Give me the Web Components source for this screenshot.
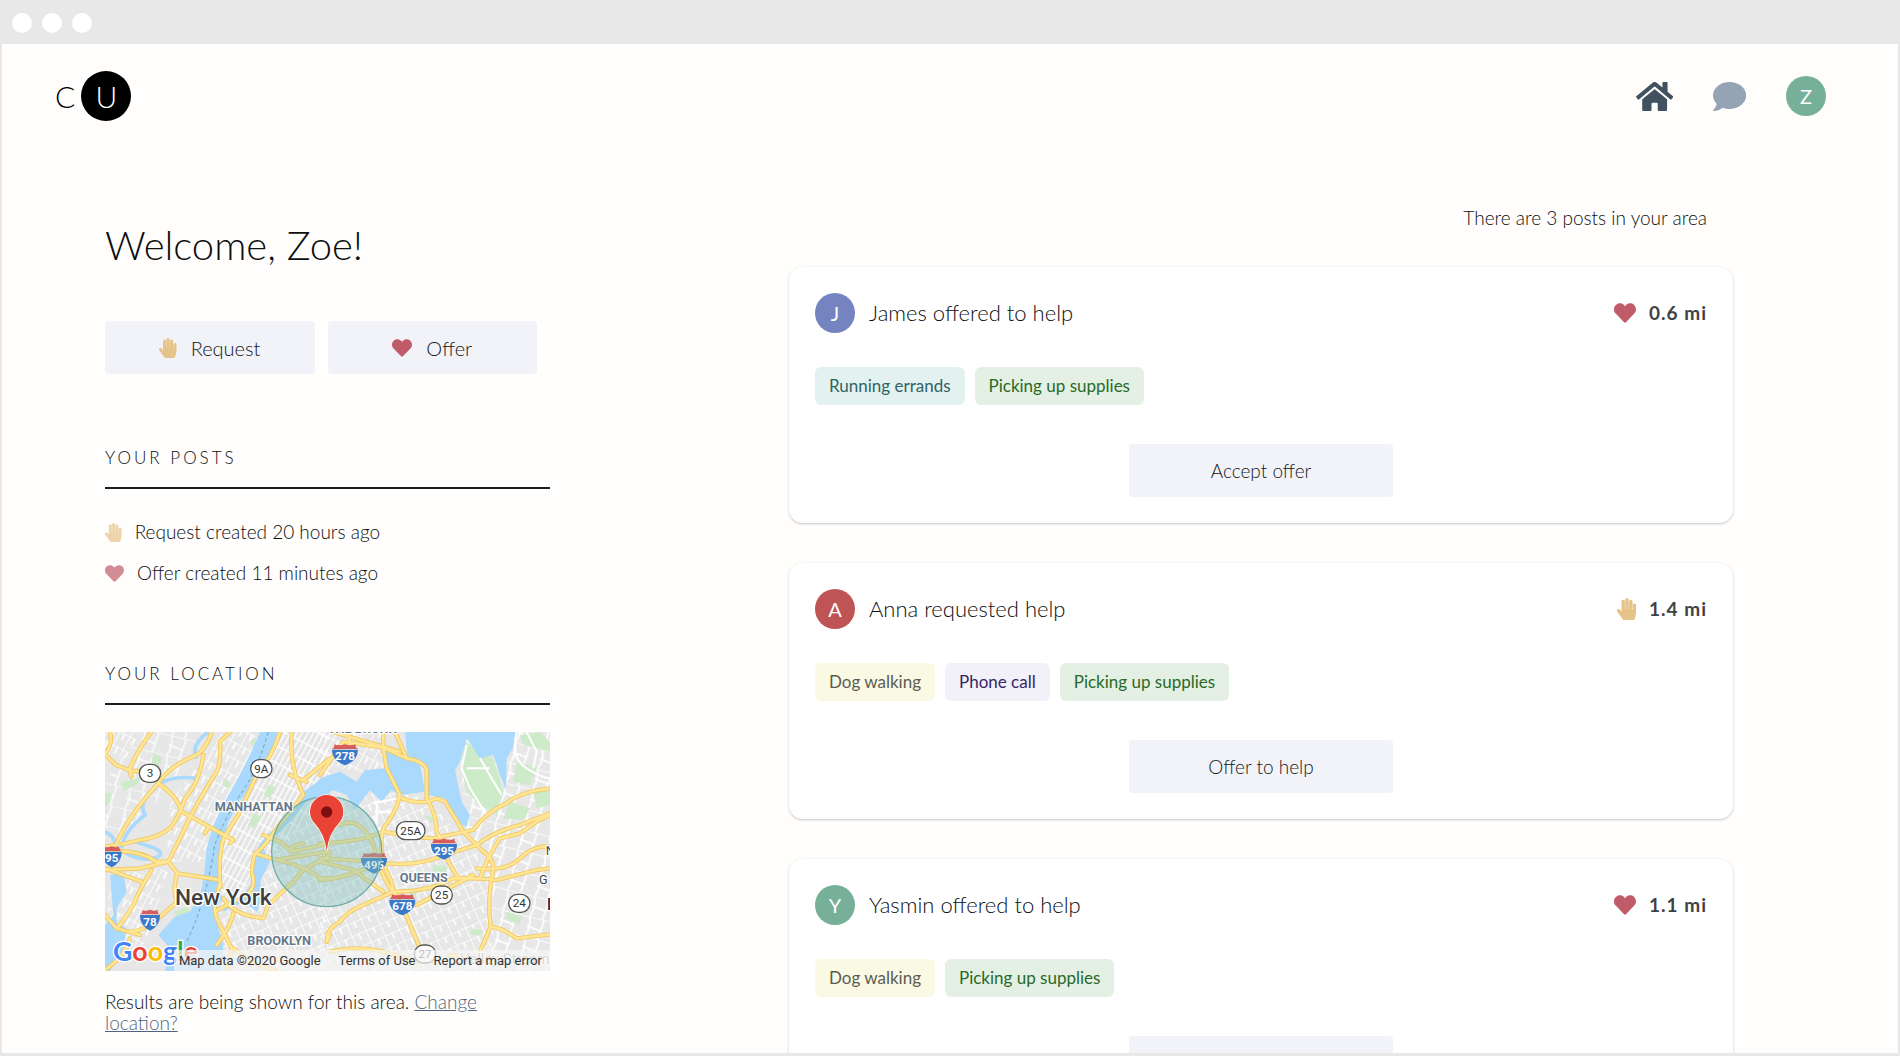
<!DOCTYPE html>
<html lang="en">
<head>
<meta charset="utf-8">
<meta name="viewport" content="width=device-width, initial-scale=1">
<title>CU</title>
<style>
  html, body { margin: 0; height: 100%; }
  body {
    font-family: Lato, "Open Sans", sans-serif;
    font-weight: 300;
    font-size: 19px;
    line-height: 24px;
    color: #0c0e10;
    background: #e8e8e8;
  }
</style>
</head>
<body>
<cu-window>
  <cu-header slot="header"></cu-header>
  <cu-dashboard>
    <cu-sidebar slot="side"></cu-sidebar>
    <cu-feed slot="feed">
      <cu-post initial="J" color="#7583c0" kind="offer" distance="0.6 mi" action="Accept offer">
        James offered to help
        <cu-tag slot="tags" tone="teal">Running errands</cu-tag>
        <cu-tag slot="tags" tone="green">Picking up supplies</cu-tag>
      </cu-post>
      <cu-post initial="A" color="#be5454" kind="request" distance="1.4 mi" action="Offer to help">
        Anna requested help
        <cu-tag slot="tags" tone="yellow">Dog walking</cu-tag>
        <cu-tag slot="tags" tone="purple">Phone call</cu-tag>
        <cu-tag slot="tags" tone="green">Picking up supplies</cu-tag>
      </cu-post>
      <cu-post initial="Y" color="#77b098" kind="offer" distance="1.1 mi" action="Accept offer">
        Yasmin offered to help
        <cu-tag slot="tags" tone="yellow">Dog walking</cu-tag>
        <cu-tag slot="tags" tone="green">Picking up supplies</cu-tag>
      </cu-post>
    </cu-feed>
  </cu-dashboard>
</cu-window>

<script>
const define = (name, render) => customElements.define(name, class extends HTMLElement {
  connectedCallback() {
    if (this.shadowRoot) return;
    this.attachShadow({ mode: "open" }).innerHTML = render(this);
  }
});

const ICONS = {
  home: ["0 32 576 448", "M280.37 148.26L96 300.11V464a16 16 0 0 0 16 16l112.06-.29a16 16 0 0 0 15.92-16V368a16 16 0 0 1 16-16h64a16 16 0 0 1 16 16v95.64a16 16 0 0 0 16 16.05L464 480a16 16 0 0 0 16-16V300L295.67 148.26a12.19 12.19 0 0 0-15.3 0zM571.6 251.47L488 182.56V44.05a12 12 0 0 0-12-12h-56a12 12 0 0 0-12 12v72.61L318.47 43a48 48 0 0 0-61 0L4.34 251.47a12 12 0 0 0-1.6 16.9l25.5 31A12 12 0 0 0 45.15 301l235.22-193.74a12.19 12.19 0 0 1 15.3 0L530.9 301a12 12 0 0 0 16.9-1.6l25.5-31a12 12 0 0 0-1.7-16.93z"],
  comment: ["0 32 512 448", "M256 32C114.6 32 0 125.1 0 240c0 49.6 21.4 95 57 130.7C44.5 421.1 2.7 466 2.2 466.5c-2.2 2.3-2.8 5.7-1.5 8.7S4.8 480 8 480c66.3 0 116-31.8 140.6-51.4 32.7 12.3 69 19.4 107.4 19.4 141.4 0 256-93.1 256-208S397.4 32 256 32z"],
  request: ["0 0 448 512", "M408.781 128.007C386.356 127.578 368 146.36 368 168.79V256h-8V79.79c0-22.43-18.356-41.212-40.781-40.783C297.488 39.423 280 57.169 280 79v177h-8V40.79C272 18.36 253.644-.422 231.219.007 209.488.423 192 18.169 192 40v216h-8V80.79c0-22.43-18.356-41.212-40.781-40.783C121.488 40.423 104 58.169 104 80v235.992l-31.648-43.519c-12.993-17.866-38.009-21.817-55.877-8.823-17.865 12.994-21.815 38.01-8.822 55.877l125.601 172.705A48 48 0 0 0 172.073 512h197.59c22.274 0 41.622-15.324 46.724-37.006l26.508-112.66a192.011 192.011 0 0 0 5.104-43.975V168c.001-21.831-17.487-39.577-39.218-39.993z"],
  offer: ["0 0 512 512", "M462.3 62.6C407.5 15.9 326 24.3 275.7 76.2L256 96.5l-19.7-20.3C186.1 24.3 104.5 15.9 49.7 62.6c-62.8 53.6-66.1 149.8-9.9 207.9l193.5 199.8c12.5 12.9 32.8 12.9 45.3 0l193.5-199.8c56.3-58.1 53-154.3-9.8-207.9z"]
};

/* Icon drawn as high as --size, in its own colour. */
define("cu-icon", el => {
  const [box, d] = ICONS[el.getAttribute("name")];
  return `
  <style>
    :host { display: block; flex: none; height: var(--size, 20px); color: inherit; }
    :host([name="request"]) { color: #e6c388; }
    :host([name="offer"]) { color: #c05c69; }
    svg { display: block; height: 100%; fill: currentColor; }
  </style>
  <svg viewBox="${box}" aria-hidden="true"><path d="${d}"/></svg>`;
});

define("cu-avatar", el => `
  <style>
    :host {
      display: flex; align-items: center; justify-content: center; flex: none;
      width: 40px; height: 40px; border-radius: 50%;
      background: ${el.getAttribute("color")}; color: #fff;
      font-size: 20px; font-weight: 400;
    }
  </style>
  <slot></slot>`);

define("cu-tag", () => `
  <style>
    :host { display: block; padding: 7px 14px; border-radius: 6px; font-size: 17px; font-weight: 400; }
    :host([tone="teal"]) { background: #e4f1f1; color: #2f6464; }
    :host([tone="green"]) { background: #e5f0e4; color: #286a28; }
    :host([tone="yellow"]) { background: #f9f9e4; color: #5c5c55; }
    :host([tone="purple"]) { background: #f2f0f9; color: #352667; }
  </style>
  <slot></slot>`);

define("cu-button", () => `
  <style>
    :host { display: block; }
    button {
      display: flex; align-items: center; justify-content: center; gap: 14px;
      width: 100%; height: 53px; border: 0; border-radius: 4px; padding: 0 16px;
      background: #f2f3f8; color: #14171a; font: inherit; cursor: pointer;
    }
  </style>
  <button type="button"><slot></slot></button>`);

define("cu-window", () => `
  <style>
    :host { display: flex; flex-direction: column; height: 100vh; box-sizing: border-box; padding: 0 2px 3px; background: #e8e8e8; }
    .bar { flex: none; display: flex; align-items: center; gap: 10px; height: 44px; padding: 2px 10px 0; box-sizing: border-box; }
    .bar i { width: 20px; height: 20px; border-radius: 50%; background: #fff; }
    .view { flex: 1; min-height: 0; overflow: hidden; background: #fffefc; }
  </style>
  <div class="bar"><i></i><i></i><i></i></div>
  <div class="view"><slot name="header"></slot><slot></slot></div>`);

define("cu-header", () => `
  <style>
    :host { display: block; }
    header { display: flex; align-items: center; justify-content: space-between; padding: 27px 72px 25px 53px; }
    .logo { display: flex; align-items: center; gap: 6px; color: #000; text-decoration: none; font-size: 30px; line-height: 50px; }
    .logo b { width: 50px; height: 50px; border-radius: 50%; background: #000; color: #fff; font-weight: inherit; text-align: center; }
    nav { display: flex; align-items: center; gap: 40px; --size: 29px; }
    nav a { display: block; color: #95a4b4; text-decoration: none; }
    nav a.on { color: #42515f; }
  </style>
  <header>
    <a class="logo" href="#home"><span>C</span><b>U</b></a>
    <nav>
      <a class="on" href="#home" aria-label="Home"><cu-icon name="home"></cu-icon></a>
      <a href="#messages" aria-label="Messages"><cu-icon name="comment"></cu-icon></a>
      <a href="#profile"><cu-avatar color="#77b098">Z</cu-avatar></a>
    </nav>
  </header>`);

define("cu-dashboard", () => `
  <style>
    :host { display: grid; grid-template-columns: minmax(0, 445fr) minmax(0, 944fr); gap: 239px; padding: 0 165px 0 103px; }
  </style>
  <slot name="side"></slot><slot name="feed"></slot>`);

define("cu-section", () => `
  <style>
    :host { display: block; }
    h2 { margin: 0; padding-bottom: 17px; border-bottom: 2px solid #1c1f21; font: inherit; font-size: 17px; line-height: 24px; letter-spacing: 3px; text-transform: uppercase; }
  </style>
  <h2><slot name="title"></slot></h2>
  <slot></slot>`);

define("cu-sidebar", () => `
  <style>
    :host { display: block; padding-top: 75px; }
    h1 { margin: 0 0 52px; font-size: 40px; line-height: 48px; font-weight: 300; }
    .actions { display: grid; grid-template-columns: 1fr 1fr; gap: 13px; margin: 0 13px 72px 0; font-size: 20px; }
    ul { list-style: none; margin: 31px 0 77px; padding: 0; display: grid; gap: 17px; --size: 19px; }
    li { display: flex; align-items: center; gap: 13px; }
    li cu-icon { opacity: .7; }
    cu-map { margin-top: 27px; }
    p { margin: 20px 0 0; line-height: 21px; padding-right: 40px; }
    a { color: #4f6380; }
  </style>
  <h1>Welcome, Zoe!</h1>
  <div class="actions">
    <cu-button><cu-icon name="request"></cu-icon>Request</cu-button>
    <cu-button><cu-icon name="offer"></cu-icon>Offer</cu-button>
  </div>
  <cu-section>
    <span slot="title">Your posts</span>
    <ul>
      <li><cu-icon name="request"></cu-icon>Request created 20 hours ago</li>
      <li><cu-icon name="offer"></cu-icon>Offer created 11 minutes ago</li>
    </ul>
  </cu-section>
  <cu-section>
    <span slot="title">Your location</span>
    <cu-map></cu-map>
    <p>Results are being shown for this area. <a href="#location">Change location?</a></p>
  </cu-section>`);

define("cu-feed", () => `
  <style>
    :host { display: flex; flex-direction: column; gap: 40px; padding-top: 60px; }
    p { margin: 0 26px -3px; text-align: right; }
  </style>
  <p>There are 3 posts in your area</p>
  <slot></slot>`);

define("cu-post", el => `
  <style>
    :host { display: block; }
    article { padding: 26px; border-radius: 14px; background: #fff; box-shadow: 0 1px 3px rgba(0,0,0,.18), 0 1px 2px rgba(0,0,0,.06); }
    .top { display: flex; align-items: center; gap: 14px; }
    h3 { flex: 1; margin: 0; font: inherit; font-size: 22px; }
    .far { display: flex; align-items: center; gap: 13px; font-size: 19px; font-weight: 700; letter-spacing: 1px; color: #3f4244; --size: 22px; }
    .tags { display: flex; gap: 10px; margin: 34px 0 39px; }
    cu-button { width: 264px; margin: 0 auto; }
  </style>
  <article>
    <div class="top">
      <cu-avatar color="${el.getAttribute("color")}">${el.getAttribute("initial")}</cu-avatar>
      <h3><slot></slot></h3>
      <span class="far"><cu-icon name="${el.getAttribute("kind")}"></cu-icon>${el.getAttribute("distance")}</span>
    </div>
    <div class="tags"><slot name="tags"></slot></div>
    <cu-button>${el.getAttribute("action")}</cu-button>
  </article>`);

/* Interstate shield centred on x, with its top at y. */
const shield = (x, y, n) => {
  const w = n.length > 2 ? 39 : 30;
  return `<g transform="translate(${x} ${y})">
    <path d="M${-w} 14Q${-w + 9} 10 ${-w + 7} 0Q${-w / 2} 6 0 0Q${w / 2} 6 ${w - 7} 0Q${w - 9} 10 ${w} 14z" fill="#d85c5c"/>
    <path d="M${-w} 16H${w}Q${w + 1} 48 0 63Q${-w - 1} 48 ${-w} 16z" fill="#3a78c9"/>
    <text y="48" font-size="35" font-weight="700" fill="#fff" text-anchor="middle">${n}</text></g>`;
};
/* State-route oval centred on x, y. */
const route = (x, y, n) => {
  const w = n.length > 2 ? 43 : 32;
  return `<g transform="translate(${x} ${y})"><rect x="${-w}" y="-27" width="${w * 2}" height="54" rx="27" fill="#fff" stroke="#555" stroke-width="4"/>
    <text y="12" font-size="35" fill="#333" text-anchor="middle">${n}</text></g>`;
};

define("cu-map", () => `
  <style>
    :host { display: block; position: relative; overflow: hidden; font-family: Roboto, sans-serif; font-weight: 400; }
    svg { display: block; width: 100%; }
    .legal {
      position: absolute; right: 0; bottom: 0; display: flex; gap: 18px; padding: 0 8px 0 5px;
      font-size: 13px; line-height: 21px; white-space: nowrap; background: rgba(245,245,245,.7); color: #333;
    }
    .legal a { color: inherit; text-decoration: none; }
  </style>
  <svg viewBox="0 0 1335 717" role="img" aria-label="Map of New York">
    <defs>
      <pattern id="fine" width="34" height="44" patternUnits="userSpaceOnUse" patternTransform="rotate(28)"><path d="M0 0V44M0 0H34M17 0V22" stroke="#fff" stroke-width="5" fill="none"/></pattern>
      <pattern id="island" width="15" height="46" patternUnits="userSpaceOnUse" patternTransform="rotate(28)"><path d="M0 0V46M0 0H15" stroke="#fff" stroke-width="8" fill="none"/></pattern>
      <pattern id="mid" width="46" height="38" patternUnits="userSpaceOnUse" patternTransform="rotate(-24)"><path d="M0 0V38M0 0H46M24 0V20" stroke="#fff" stroke-width="5" fill="none"/></pattern>
      <pattern id="wide" width="84" height="62" patternUnits="userSpaceOnUse" patternTransform="rotate(14)"><path d="M0 0Q14 30 0 62M0 0H84M46 0L40 62M0 30L46 36" stroke="#fff" stroke-width="5" fill="none"/></pattern>
      <g id="roads" fill="none" stroke-linecap="round" stroke-linejoin="round">
        <g transform="translate(-45 -51)">
          <path d="M45 118L78 150L125 168H150M125 185L118 165Q135 120 183 51M60 51Q70 85 45 118"/>
          <path d="M365 51Q350 100 320 120Q240 150 200 210Q110 310 78 390L45 395"/>
          <path d="M340 120Q330 200 285 250Q270 300 240 340Q200 370 150 375L95 388"/>
          <path d="M205 205Q260 240 275 290L430 375L420 385M355 338L345 355"/>
          <path d="M420 51L390 80Q395 160 370 185Q300 300 275 360L235 440"/>
          <path d="M45 410Q140 400 200 440L235 440L262 475L390 495L392 515"/>
          <path d="M45 465L150 460L235 440M185 465Q150 520 130 570Q100 620 80 640L45 600M45 460L155 500"/>
          <path d="M262 475Q245 530 262 560L205 610Q160 650 120 650M80 640L150 660M120 670Q110 720 45 765"/>
          <path d="M570 51Q550 120 500 180L445 300L400 370Q385 430 390 500L375 570Q370 600 400 650L425 700L410 768"/>
          <path d="M605 51Q600 130 620 190L640 240L560 340Q520 400 495 415Q480 470 490 490Q495 540 430 560L375 590M400 550Q430 600 520 610L535 570L610 500L640 465"/>
          <path d="M640 195L720 130M600 180L650 200M520 360L570 380L605 410L720 385M495 415L560 435Q640 420 720 410M560 435Q650 455 690 490H720M605 410Q600 390 640 385M640 465L720 420"/>
          <path d="M430 595Q420 640 380 690M710 680L720 660M430 700L480 740L560 768"/>
        </g>
        <g transform="translate(645 -51)">
          <path d="M0 180L70 80L190 98L260 130Q320 140 320 170V250M190 51V98M40 51L240 110M225 51L260 130M85 51L90 90"/>
          <path d="M190 98L200 160L240 240Q230 290 190 340Q170 420 215 500L220 530"/>
          <path d="M235 245Q300 275 350 250L375 260L430 350L490 410Q520 430 520 460Q500 560 512 635L480 710"/>
          <path d="M320 250Q350 300 350 350Q380 400 385 440L415 490"/>
          <path d="M0 385Q130 380 190 350L270 365L340 370L460 345Q500 290 560 265Q600 230 690 220"/>
          <path d="M0 430L160 440Q270 460 360 425L470 390Q520 350 600 330L690 295"/>
          <path d="M0 495Q80 490 160 450M60 330Q120 300 160 390Q190 510 230 540M0 440L100 465L190 530"/>
          <path d="M20 680Q20 640 60 620Q80 590 130 570L220 530Q330 530 400 490H480Q500 430 540 370L600 355L650 320L690 300"/>
          <path d="M470 460Q560 470 600 430T690 395M470 490L530 495L650 465L690 460M220 530L250 580L300 700M290 570L460 480"/>
          <path d="M512 635Q550 640 590 670L690 658M30 710Q110 690 190 710L290 740M390 720L500 735"/>
        </g>
      </g>
    </defs>
    <rect width="1335" height="717" fill="#e7e7e7"/>
    <g transform="translate(-45 -51)">
      <path d="M45 51H150L110 130L45 120zM240 260L400 51H510L340 440L230 440zM60 480L240 460L160 700L45 740z" fill="url(#fine)"/>
      <path d="M150 51H340L250 200L80 400L45 330V200z" fill="url(#wide)" opacity=".8"/>
      <path d="M560 51H720V230L500 480L400 590L380 520L400 380L500 180z" fill="#e4e4e4"/>
      <path d="M560 51H720V230L500 480L400 590L380 520L400 380L500 180z" fill="url(#island)"/>
      <path d="M500 480L560 380L720 260V768H400L390 590z" fill="url(#mid)"/>
      <g fill="#cdeac9"><path d="M188 112L218 130L200 165L185 160zM45 235h22l-10 30-12 15zM95 205l60-20-10 22-45 20zM535 210l22 8-18 32-18-12zM490 295l25 10-22 35-20-8zM400 190l22 15-8 15-15-8zM250 590l40-15 15 20-40 15zM350 620l35 20 15 50-25-15zM480 80l20-15-5 40z"/></g>
      <g fill="#a9d9fd"><path d="M510 51H562Q545 120 510 165L450 260L415 320L402 370Q385 430 385 490L398 550L372 590L385 640L400 690L392 768H225L240 700L205 660L255 605L300 590L330 540Q345 480 350 400Q370 320 410 250Q470 150 510 51z"/>
        <path d="M60 480L100 475L110 530L80 580V625L110 640L100 700L60 768H45V630L70 600z"/>
        <path d="M720 190V240L650 260L600 320Q540 380 520 400L540 440L510 500L520 540L500 590L460 560L400 590V575L460 545L485 500Q480 440 510 385Q560 330 605 290L640 230L690 195z"/></g>
      <path d="M355 51Q300 90 320 130M205 210Q240 180 320 190M200 215Q140 260 165 300Q100 350 95 400M100 410Q150 440 190 430T195 400L135 380M45 350Q90 370 80 440" fill="none" stroke="#a9d9fd" stroke-width="11"/>
      <path d="M535 51Q500 170 450 240Q370 370 370 420Q340 580 290 680" fill="none" stroke="#7e98ad" stroke-width="3" stroke-dasharray="11 8"/>
    </g>
    <g transform="translate(645 -51)">
      <path d="M0 51H190V180L0 150z" fill="url(#fine)"/>
      <path d="M0 260L240 220L330 260L430 370L520 460V768H0z" fill="url(#mid)"/>
      <path d="M420 51H690V768H500V460L430 340z" fill="url(#wide)"/>
      <g fill="#cdeac9"><path d="M430 75L480 110L520 130L550 230L530 300L480 270L440 230L425 160zM600 60L660 51L690 80V110L610 90zM590 140l60 20-20 50-50-10zM570 260l60 20-20 35-60-5zM640 230l50-10v50l-40 10zM200 120l40 10-20 40zM340 450l45 5-20 40-30-10zM250 520l45 5-10 25zM455 640l35 8-6 14-35-5zM560 590l45 15-8 25-40-20zM600 720l60 5v20l-60-5zM310 300l30 10-5 15z"/></g>
      <path d="M255 51H585Q590 90 560 130L558 225L540 180L520 120L480 130L440 70L420 140L405 165L425 260L450 300L440 335L425 330L375 250L325 240L320 150L262 122zM0 190L60 170L110 200L135 165L195 160L235 240L215 225L185 260L150 225L105 285L80 240L40 225L0 245zM195 98L250 130L300 145L315 230L240 240L205 160z" fill="#a9d9fd"/>
      <path d="M440 90L425 160L450 220L500 300M480 130Q520 200 545 240M590 51Q570 130 620 160T690 190M440 160H510M620 51L650 110L640 160M160 265L235 250M165 290H220M170 265V330" fill="none" stroke="#fff" stroke-width="6"/>
    </g>
    <use href="#roads" stroke="#efc75e" stroke-width="13"/>
    <use href="#roads" stroke="#ffe594" stroke-width="8"/>
    ${shield(20, 343, "95")}${shield(135, 533, "78")}${shield(720, 37, "278")}${shield(807, 362, "495")}${shield(1017, 320, "295")}${shield(892, 487, "678")}
    <circle cx="665" cy="359" r="165" fill="#7fc0bd" fill-opacity=".4" stroke="#6fada6" stroke-width="4"/>
    ${route(135, 124, "3")}${route(469, 110, "9A")}${route(917, 296, "25A")}${route(1010, 489, "25")}${route(1243, 514, "24")}${route(960, 666, "27")}
    <g fill="#65788a" font-weight="700" stroke="#fff" stroke-width="7" stroke-linejoin="round" paint-order="stroke" font-size="38">
      <text x="329" y="238">MANHATTAN</text>
      <text x="427" y="640">BROOKLYN</text>
      <text x="884" y="449">QUEENS</text>
      <text x="1322" y="369" fill="#444" font-weight="400">N</text>
      <text x="1302" y="456" fill="#444" font-weight="400">G</text>
      <text x="1326" y="535" fill="#333" font-size="50">H</text>
      <text x="668" y="2">THE BRONX</text>
      <text x="1066" y="696" font-size="44" font-weight="400" fill="#8f8f8f">Valley Stream</text>
    </g>
    <text transform="translate(262 705) rotate(-78)" font-size="34" fill="#5e86b8">Bay</text>
    <text x="210" y="519" font-size="68" font-weight="500" fill="#3f3f3f" stroke="#fff" stroke-width="8" stroke-linejoin="round" paint-order="stroke">New York</text>
    <path d="M665 357Q660 308 629 274A50 50 0 1 1 701 274Q670 308 665 357z" fill="#ea4335" stroke="#fff" stroke-width="4" paint-order="stroke"/>
    <circle cx="665" cy="240" r="17" fill="#7d0f0f"/>
    <text x="24" y="686" font-family="Lato, sans-serif" font-size="80" font-weight="700" stroke="#fff" stroke-width="8" paint-order="stroke"><tspan fill="#4285f4">G</tspan><tspan fill="#ea4335">o</tspan><tspan fill="#fbbc05">o</tspan><tspan fill="#4285f4">g</tspan><tspan fill="#34a853">l</tspan><tspan fill="#ea4335">e</tspan></text>
  </svg>
  <div class="legal"><span>Map data ©2020 Google</span><a href="#terms">Terms of Use</a><a href="#report">Report a map error</a></div>`);
</script>
</body>
</html>
